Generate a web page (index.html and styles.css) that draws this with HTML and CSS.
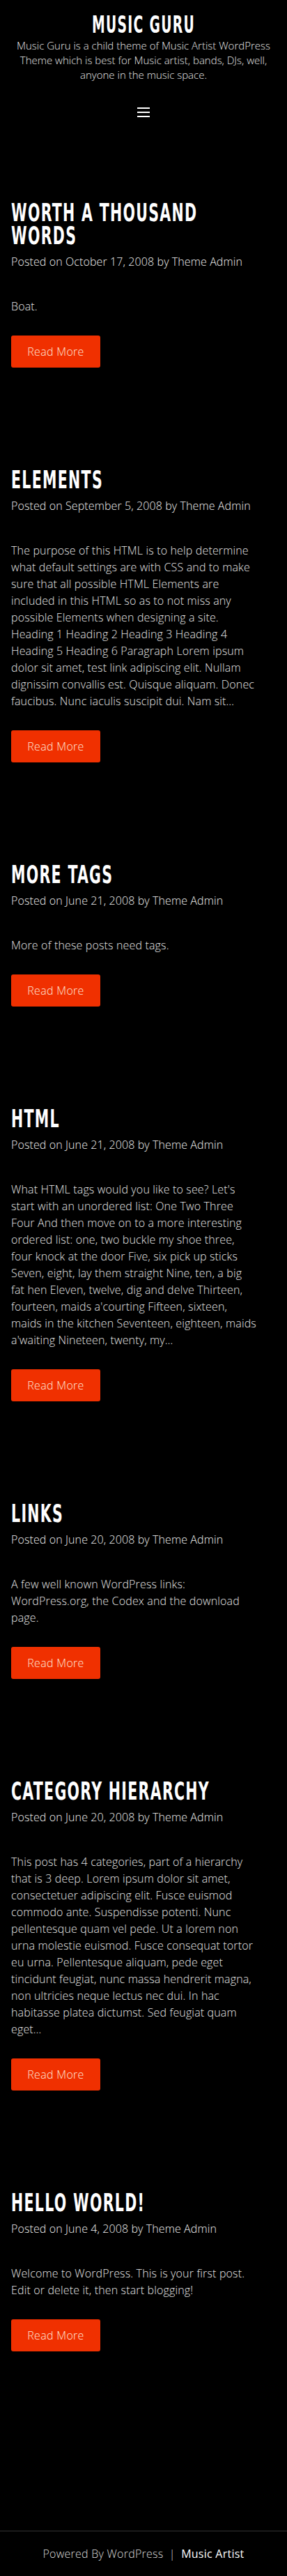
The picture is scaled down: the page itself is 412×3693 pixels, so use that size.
FILE: index.html
```html
<!DOCTYPE html>
<html lang="en">
<head>
<meta charset="utf-8">
<meta name="viewport" content="width=device-width, initial-scale=1">
<title>Music Guru</title>
<link rel="stylesheet" href="styles.css">
</head>
<body>
<header class="site-header">
  <h1 class="site-title">MUSIC GURU</h1>
  <p class="site-desc">Music Guru is a child theme of Music Artist WordPress Theme which is best for Music artist, bands, DJs, well, anyone in the music space.</p>
  <button class="menu-toggle" aria-label="Menu">
    <span class="bar"></span><span class="bar"></span><span class="bar"></span>
  </button>
</header>

<main class="posts">
  <article class="post">
    <h2 class="post-title">WORTH A THOUSAND WORDS</h2>
    <div class="post-meta">Posted on October 17, 2008 by Theme Admin</div>
    <p class="post-text">Boat.</p>
    <a class="read-more" href="#">Read More</a>
  </article>

  <article class="post">
    <h2 class="post-title">ELEMENTS</h2>
    <div class="post-meta">Posted on September 5, 2008 by Theme Admin</div>
    <p class="post-text">The purpose of this HTML is to help determine what default settings are with CSS and to make sure that all possible HTML Elements are included in this HTML so as to not miss any possible Elements when designing a site. Heading 1 Heading 2 Heading 3 Heading 4 Heading 5 Heading 6 Paragraph Lorem ipsum dolor sit amet, test link adipiscing elit. Nullam dignissim convallis est. Quisque aliquam. Donec faucibus. Nunc iaculis suscipit dui. Nam sit…</p>
    <a class="read-more" href="#">Read More</a>
  </article>

  <article class="post">
    <h2 class="post-title">MORE TAGS</h2>
    <div class="post-meta">Posted on June 21, 2008 by Theme Admin</div>
    <p class="post-text">More of these posts need tags.</p>
    <a class="read-more" href="#">Read More</a>
  </article>

  <article class="post">
    <h2 class="post-title">HTML</h2>
    <div class="post-meta">Posted on June 21, 2008 by Theme Admin</div>
    <p class="post-text">What HTML tags would you like to see? Let's start with an unordered list: One Two Three Four And then move on to a more interesting ordered list: one, two buckle my shoe three, four knock at the door Five, six pick up sticks Seven, eight, lay them straight Nine, ten, a big fat hen Eleven, twelve, dig and delve Thirteen, fourteen, maids a'courting Fifteen, sixteen, maids in the kitchen Seventeen, eighteen, maids a'waiting Nineteen, twenty, my…</p>
    <a class="read-more" href="#">Read More</a>
  </article>

  <article class="post">
    <h2 class="post-title">LINKS</h2>
    <div class="post-meta">Posted on June 20, 2008 by Theme Admin</div>
    <p class="post-text">A few well known WordPress links: WordPress.org, the Codex and the download page.</p>
    <a class="read-more" href="#">Read More</a>
  </article>

  <article class="post">
    <h2 class="post-title">CATEGORY HIERARCHY</h2>
    <div class="post-meta">Posted on June 20, 2008 by Theme Admin</div>
    <p class="post-text">This post has 4 categories, part of a hierarchy that is 3 deep. Lorem ipsum dolor sit amet, consectetuer adipiscing elit. Fusce euismod commodo ante. Suspendisse potenti. Nunc pellentesque quam vel pede. Ut a lorem non urna molestie euismod. Fusce consequat tortor eu urna. Pellentesque aliquam, pede eget tincidunt feugiat, nunc massa hendrerit magna, non ultricies neque lectus nec dui. In hac habitasse platea dictumst. Sed feugiat quam eget…</p>
    <a class="read-more" href="#">Read More</a>
  </article>

  <article class="post">
    <h2 class="post-title">HELLO WORLD!</h2>
    <div class="post-meta">Posted on June 4, 2008 by Theme Admin</div>
    <p class="post-text">Welcome to WordPress. This is your first post. Edit or delete it, then start blogging!</p>
    <a class="read-more" href="#">Read More</a>
  </article>
</main>

<footer class="site-footer">
  <p class="credits">Powered By WordPress <span class="sep">|</span> <a class="credit-link" href="#">Music Artist</a></p>
</footer>
</body>
</html>
```

FILE: styles.css
```css
html, body {
  margin: 0;
  padding: 0;
  background: #000;
  overflow-x: hidden;
}

body {
  color: #e8e8e8;
  font-family: "Open Sans", "Noto Sans", sans-serif;
  font-weight: 300;
  font-size: 16px;
  line-height: 24px;
}

.site-header {
  padding: 18px 16px 0;
  text-align: center;
}

.site-title {
  margin: 0;
  font-family: "DejaVu Sans Condensed", "DejaVu Sans", sans-serif;
  font-stretch: condensed;
  font-weight: 700;
  font-size: 33px;
  line-height: 36px;
  letter-spacing: 2px;
  color: #fff;
  transform: scaleX(0.633);
  transform-origin: center;
}

.site-desc {
  margin: 1px 0 0;
  font-size: 15px;
  line-height: 21px;
  color: #e6e6e6;
}

.menu-toggle {
  display: flex;
  flex-direction: column;
  gap: 4px;
  margin: 36px auto 0;
  padding: 0;
  width: 18px;
  background: none;
  border: 0;
  cursor: pointer;
}

.menu-toggle .bar {
  display: block;
  width: 18px;
  height: 2px;
  background: #fff;
}

.posts {
  padding: 121px 0 0 16px;
}

.post {
  width: 353px;
  margin-bottom: 145px;
}

.post:last-child {
  margin-bottom: 257px;
}

.post-title {
  width: calc(100% / 0.652);
  margin: 0;
  font-family: "DejaVu Sans Condensed", "DejaVu Sans", sans-serif;
  font-stretch: condensed;
  font-weight: 700;
  font-size: 35px;
  line-height: 33px;
  letter-spacing: 2px;
  color: #fff;
  transform: scaleX(0.652);
  transform-origin: left top;
}

.post-meta {
  margin-top: 8px;
  font-size: 16px;
  line-height: 24px;
  letter-spacing: 0.1px;
  color: #f0f0f0;
}

.post-text {
  margin: 40px 0 0;
  font-size: 16px;
  line-height: 24px;
  letter-spacing: 0.15px;
  color: #e6e6e6;
}

.read-more {
  display: block;
  width: 128px;
  height: 46px;
  margin-top: 30px;
  line-height: 46px;
  text-align: center;
  background: #f03000;
  color: #ffe9dc;
  border-radius: 3px;
  text-decoration: none;
  font-size: 16px;
  letter-spacing: 0.3px;
}

.site-footer {
  border-top: 1px solid #333;
  padding: 20px 16px 20px;
  text-align: center;
}

.credits {
  margin: 0;
  font-size: 16px;
  line-height: 24px;
  letter-spacing: 0.25px;
  color: #dcdcdc;
}

.sep {
  margin: 0 4px;
}

.credit-link {
  color: #fff;
  font-weight: 400;
  text-decoration: none;
}
```
